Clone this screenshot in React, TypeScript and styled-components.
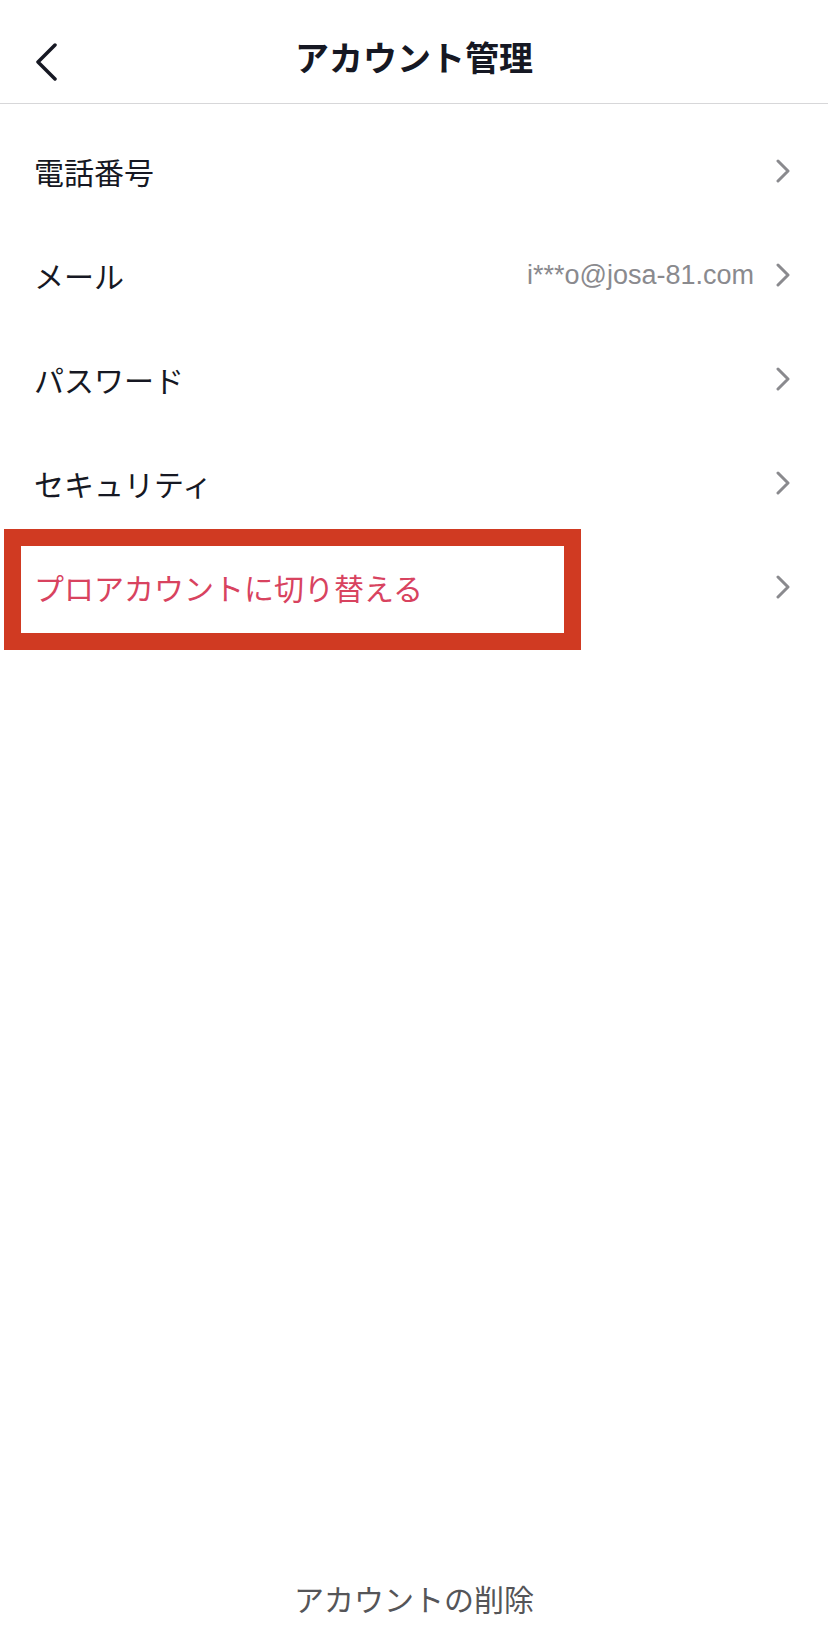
import React from "react";
import styled, { createGlobalStyle } from "styled-components";

const GlobalStyle = createGlobalStyle`
  html, body {
    margin: 0;
    padding: 0;
    background: #ffffff;
  }
  body {
    font-family: "Noto Sans CJK JP", "Noto Sans", sans-serif;
    color: #161823;
  }
`;

const Page = styled.div`
  width: 828px;
  min-height: 1632px;
  display: flex;
  flex-direction: column;
  background: #ffffff;
`;

const Header = styled.header`
  height: 104px;
  padding-top: 10px;
  box-sizing: border-box;
  display: grid;
  grid-template-columns: 90px 1fr 90px;
  align-items: center;
  border-bottom: 1px solid #d7d7d9;
`;

const BackButton = styled.button`
  border: none;
  background: none;
  padding: 0;
  margin: 10px 0 0 35px;
  width: 22px;
  height: 38px;
  display: flex;
  align-items: center;
  cursor: pointer;
`;

const Title = styled.h1`
  margin: 0;
  text-align: center;
  font-size: 34px;
  font-weight: 700;
  line-height: 46px;
  color: #161823;
`;

const List = styled.ul`
  list-style: none;
  margin: 0;
  padding: 15px 0 0;
`;

const Row = styled.li`
  position: relative;
  height: 104px;
  padding: 0 38px 0 34px;
  display: flex;
  align-items: center;
  gap: 22px;
`;

const Label = styled.span<{ $accent?: boolean }>`
  flex: 1;
  font-size: 30px;
  line-height: 40px;
  font-weight: 400;
  color: ${(p) => (p.$accent ? "#d8435f" : "#161823")};
`;

const Value = styled.span`
  font-family: "Liberation Sans", Arial, sans-serif;
  font-size: 27px;
  line-height: 40px;
  color: #8a8a8e;
`;

const Highlight = styled.div`
  position: absolute;
  left: 4px;
  top: -6px;
  width: 577px;
  height: 121px;
  box-sizing: border-box;
  border: 17px solid #d03a22;
  pointer-events: none;
`;

const Spacer = styled.div`
  flex: 1;
`;

const Footer = styled.div`
  padding-bottom: 14px;
  text-align: center;
  font-size: 30px;
  line-height: 40px;
  color: #555558;
`;

const Chevron = () => (
  <svg width="14" height="24" viewBox="0 0 14 24" fill="none">
    <polyline
      points="2,2 12,12 2,22"
      stroke="#8a8a8e"
      strokeWidth="3"
      strokeLinecap="round"
      strokeLinejoin="round"
    />
  </svg>
);

const BackIcon = () => (
  <svg width="22" height="38" viewBox="0 0 22 38" fill="none">
    <polyline
      points="20,2 3,19 20,36"
      stroke="#161823"
      strokeWidth="3.5"
      strokeLinecap="round"
      strokeLinejoin="round"
    />
  </svg>
);

type Item = { label: string; value?: string; accent?: boolean; marked?: boolean };

const ITEMS: Item[] = [
  { label: "電話番号" },
  { label: "メール", value: "i***o@josa-81.com" },
  { label: "パスワード" },
  { label: "セキュリティ" },
  { label: "プロアカウントに切り替える", accent: true, marked: true },
];

const App = () => {
  return (
    <Page>
      <GlobalStyle />
      <Header>
        <BackButton aria-label="戻る">
          <BackIcon />
        </BackButton>
        <Title>アカウント管理</Title>
        <span />
      </Header>
      <List>
        {ITEMS.map((item) => (
          <Row key={item.label}>
            <Label $accent={item.accent}>{item.label}</Label>
            {item.value && <Value>{item.value}</Value>}
            <Chevron />
            {item.marked && <Highlight />}
          </Row>
        ))}
      </List>
      <Spacer />
      <Footer>アカウントの削除</Footer>
    </Page>
  );
};

export default App;
